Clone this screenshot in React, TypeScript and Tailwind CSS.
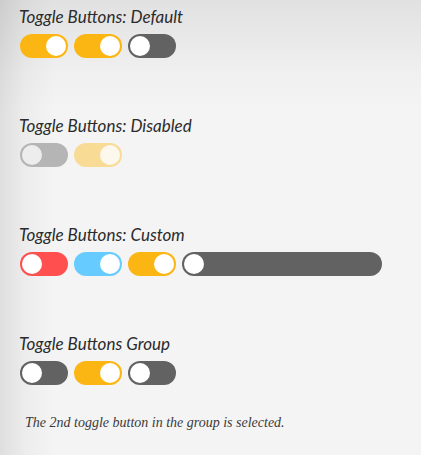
import { FC } from "react"

interface ToggleProps {
  on: boolean
  track: string
  knob?: string
  width?: string
}

// Track colours are passed as full class names so Tailwind picks them up
const Toggle: FC<ToggleProps> = ({ on, track, knob = "bg-white", width = "w-[48px]" }) => (
  <div
    className={`${width} h-[24px] rounded-full p-[2px] flex ${on ? "justify-end" : "justify-start"} ${track}`}
  >
    <div className={`w-[20px] h-[20px] rounded-full ${knob}`} />
  </div>
)

const Section: FC<{ title: string; children: React.ReactNode }> = ({ title, children }) => (
  <div className="h-[109px]">
    <div className="text-[17px] leading-[20px] italic text-[#2b2b2b] font-['Lato',sans-serif]">{title}</div>
    <div className="flex gap-[6px] mt-[7px] pl-[1px]">{children}</div>
  </div>
)

const App: FC = () => {
  return (
    <div className="w-[421px] h-[455px] overflow-hidden bg-[#f4f4f4] bg-[linear-gradient(to_right,rgba(0,0,0,0.09),rgba(0,0,0,0.03)_25px,transparent_55px),linear-gradient(to_bottom,rgba(0,0,0,0.08),rgba(0,0,0,0.02)_70px,transparent_110px)] pl-[19px] pt-[7px]">
      <Section title="Toggle Buttons: Default">
        <Toggle on track="bg-[#fcb614]" />
        <Toggle on track="bg-[#fcb614]" />
        <Toggle on={false} track="bg-[#626262]" />
      </Section>

      <Section title="Toggle Buttons: Disabled">
        <Toggle on={false} track="bg-[#b5b5b5]" knob="bg-[#ededed]" />
        <Toggle on track="bg-[#f8db95]" knob="bg-[#fdf8ee]" />
      </Section>

      <Section title="Toggle Buttons: Custom">
        <Toggle on={false} track="bg-[#ff4f4f]" />
        <Toggle on track="bg-[#66ccff]" />
        <Toggle on track="bg-[#fcb614]" />
        <Toggle on={false} track="bg-[#626262]" width="w-[200px]" />
      </Section>

      <div>
        <div className="text-[17px] leading-[20px] italic text-[#2b2b2b] font-['Lato',sans-serif]">Toggle Buttons Group</div>
        <div className="flex gap-[6px] mt-[7px] pl-[1px]">
          <Toggle on={false} track="bg-[#626262]" />
          <Toggle on track="bg-[#fcb614]" />
          <Toggle on={false} track="bg-[#626262]" />
        </div>
        <p className="mt-[29px] pl-[6px] text-[14px] leading-[18px] italic text-[#3a3a3a] font-['Liberation_Serif',serif]">
          The 2nd toggle button in the group is selected.
        </p>
      </div>
    </div>
  )
}

export default App
